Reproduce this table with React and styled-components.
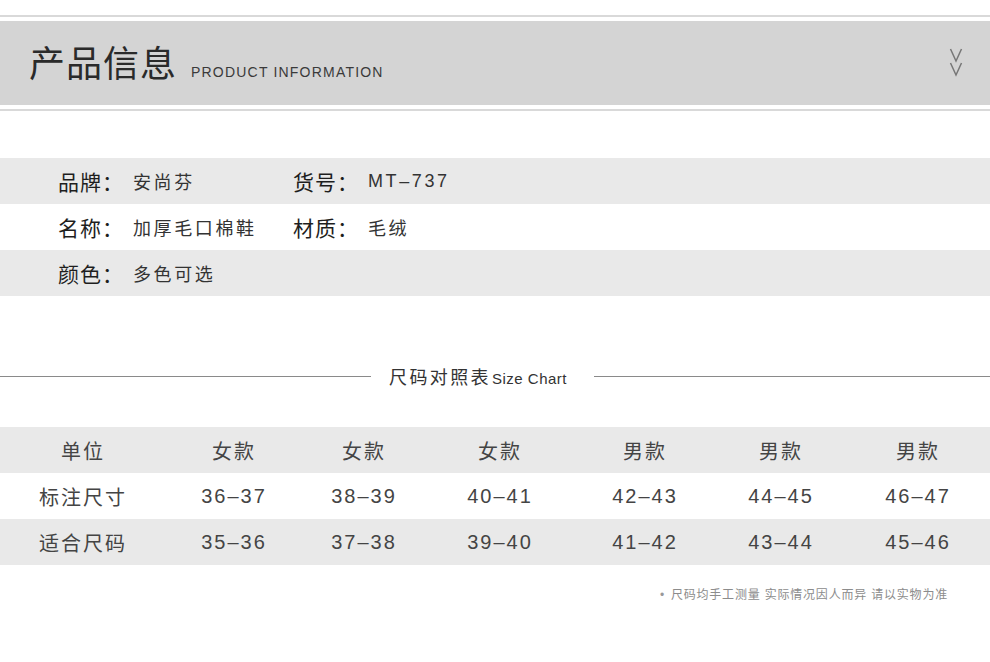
import React from 'react'
import styled, { createGlobalStyle } from 'styled-components'

const GlobalStyle = createGlobalStyle`
  html, body {
    margin: 0;
    padding: 0;
    background: #fff;
  }
  body {
    font-family: "Liberation Sans", "Noto Sans CJK SC", sans-serif;
    color: #333;
  }
`

const cjk = `"Liberation Sans", "Noto Sans CJK SC", sans-serif`

const Page = styled.div`
  width: 990px;
  height: 662px;
  padding-top: 15px;
  box-sizing: border-box;
  overflow: hidden;
`

const Rule = styled.div`
  height: 2px;
  background: #d9d9d9;
`

const Banner = styled.div`
  height: 84px;
  margin: 4px 0;
  background: #d4d4d4;
  display: flex;
  align-items: center;
  padding: 0 27px 0 29px;
`

const BannerTitle = styled.h1`
  margin: 0;
  font-family: ${cjk};
  font-weight: 400;
  font-size: 36px;
  letter-spacing: 1px;
  color: #2a2a2a;
  display: flex;
  align-items: baseline;
  flex: 1;
  margin-top: -4px;
  span {
    font-family: "Liberation Sans", sans-serif;
    font-size: 14px;
    letter-spacing: 1.2px;
    color: #3a3a3a;
    margin-left: 14px;
  }
`

const Chevrons = styled.svg`
  display: block;
  width: 14px;
  height: 29px;
  margin-top: -1px;
`

const InfoList = styled.div`
  margin-top: 47px;
`

const InfoRow = styled.div`
  height: 46px;
  display: flex;
  align-items: center;
  padding-left: 58px;
  background: ${p => (p.$shade ? '#e9e9e9' : '#fff')};
`

const InfoPair = styled.div`
  display: flex;
  align-items: center;
  width: ${p => p.$width || 'auto'};
`

const InfoLabel = styled.span`
  width: 75px;
  font-family: ${cjk};
  font-size: 21px;
  color: #1e1e1e;
  letter-spacing: 1px;
`

const InfoValue = styled.span`
  font-family: ${cjk};
  font-size: 18px;
  letter-spacing: 2.6px;
  color: #333;
`

const ChartHeading = styled.div`
  margin-top: 64px;
  height: 32px;
  display: flex;
  align-items: center;
`

const HeadLine = styled.div`
  height: 1px;
  background: #8a8a8a;
  width: ${p => p.$width || 'auto'};
  flex: ${p => (p.$grow ? 1 : 'none')};
`

const HeadText = styled.div`
  margin: 0 27px 0 18px;
  font-family: ${cjk};
  font-size: 18px;
  letter-spacing: 2.4px;
  color: #333;
  display: flex;
  align-items: baseline;
  span {
    font-family: "Liberation Sans", sans-serif;
    font-size: 15px;
    letter-spacing: 0.5px;
    margin-left: 1px;
  }
`

const Table = styled.div`
  margin-top: 35px;
`

const TableRow = styled.div`
  display: grid;
  grid-template-columns: 166px 136px 124px 148px 142px 130px 144px;
  height: 46px;
  align-items: center;
  background: ${p => (p.$shade ? '#e9e9e9' : '#fff')};
`

const Cell = styled.div`
  text-align: center;
  font-family: ${cjk};
  font-size: 20px;
  letter-spacing: 2px;
  color: #444;
`

const Note = styled.div`
  margin-top: 20px;
  padding-right: 42px;
  text-align: right;
  font-family: ${cjk};
  font-size: 12px;
  letter-spacing: 0.8px;
  color: #8c8c8c;
  &::before {
    content: '•';
    margin-right: 6px;
    color: #999;
  }
`

const info = [
  [
    ['品牌：', '安尚芬'],
    ['货号：', 'MT–737'],
  ],
  [
    ['名称：', '加厚毛口棉鞋'],
    ['材质：', '毛绒'],
  ],
  [['颜色：', '多色可选']],
]

const sizes = [
  ['单位', '女款', '女款', '女款', '男款', '男款', '男款'],
  ['标注尺寸', '36–37', '38–39', '40–41', '42–43', '44–45', '46–47'],
  ['适合尺码', '35–36', '37–38', '39–40', '41–42', '43–44', '45–46'],
]

export default function App() {
  return (
    <Page>
      <GlobalStyle />
      <Rule />
      <Banner>
        <BannerTitle>
          产品信息<span>PRODUCT INFORMATION</span>
        </BannerTitle>
        <Chevrons viewBox="0 0 14 29" fill="none" stroke="#777" strokeWidth="1.5">
          <polyline points="1.5,1 7,13 12.5,1" />
          <polyline points="1.5,15 7,27 12.5,15" />
        </Chevrons>
      </Banner>
      <Rule />

      <InfoList>
        {info.map((row, i) => (
          <InfoRow key={i} $shade={i % 2 === 0}>
            {row.map(([label, value], j) => (
              <InfoPair key={j} $width={j === 0 ? '235px' : 'auto'}>
                <InfoLabel>{label}</InfoLabel>
                <InfoValue>{value}</InfoValue>
              </InfoPair>
            ))}
          </InfoRow>
        ))}
      </InfoList>

      <ChartHeading>
        <HeadLine $width="371px" />
        <HeadText>
          尺码对照表<span>Size Chart</span>
        </HeadText>
        <HeadLine $grow />
      </ChartHeading>

      <Table>
        {sizes.map((row, i) => (
          <TableRow key={i} $shade={i % 2 === 0}>
            {row.map((c, j) => (
              <Cell key={j}>{c}</Cell>
            ))}
          </TableRow>
        ))}
      </Table>

      <Note>尺码均手工测量 实际情况因人而异 请以实物为准</Note>
    </Page>
  )
}
